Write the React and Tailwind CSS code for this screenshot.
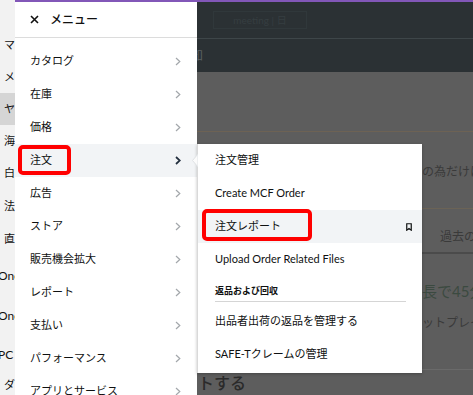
const font = { fontFamily: 'Lato, "Noto Sans CJK JP", sans-serif' };

const mainItems = [
  "カタログ",
  "在庫",
  "価格",
  "注文",
  "広告",
  "ストア",
  "販売機会拡大",
  "レポート",
  "支払い",
  "パフォーマンス",
  "アプリとサービス",
];

const stripItems = [
  { label: "マ", h: "h-[32px]" },
  { label: "メ", h: "h-[32px]" },
  { label: "ヤ", h: "h-[32px]", active: true },
  { label: "海", h: "h-[32px]" },
  { label: "白", h: "h-[33px]" },
  { label: "法", h: "h-[32px]" },
  { label: "直", h: "h-[34px]" },
  { label: "One", h: "h-[40px]", latin: true },
  { label: "One", h: "h-[40px]", latin: true },
  { label: "PC", h: "h-[38px]", latin: true },
  { label: "ダ", h: "h-[22px]" },
];

function Chevron({ dark }) {
  return (
    <svg width="6" height="9" viewBox="0 0 6 9" className="shrink-0">
      <polyline
        points="1,1 4.8,4.5 1,8"
        fill="none"
        stroke={dark ? "#232f3e" : "#a3a7ab"}
        strokeWidth={dark ? 1.7 : 1.2}
      />
    </svg>
  );
}

function Bookmark() {
  return (
    <svg width="6" height="8" viewBox="0 0 6 8">
      <path d="M0.75 0.75 H5.25 V7.2 L3 5.5 L0.75 7.2 Z" fill="none" stroke="#0f1111" strokeWidth="1.2" />
    </svg>
  );
}

function RedBox({ className }) {
  return <div className={`absolute border-4 border-[#ff0000] rounded-[5px] ${className}`} />;
}

function LeftStrip() {
  return (
    <div className="w-[15px] shrink-0 bg-[#f2f2f2] overflow-hidden flex flex-col text-[11px] text-[#111]">
      <div className="h-[29px] shrink-0" />
      {stripItems.map((it, i) => (
        <div
          key={i}
          className={`${it.h} shrink-0 flex items-center whitespace-nowrap ${it.active ? "bg-[#d5d5d5]" : ""} ${
            it.latin ? "-ml-[2px] text-[12px]" : "pl-[4px]"
          }`}
        >
          {it.label}
        </div>
      ))}
    </div>
  );
}

function MainMenu() {
  return (
    <div className="w-[182px] shrink-0 bg-white flex flex-col relative z-10 overflow-hidden">
      <div className="h-[2px] shrink-0 bg-[#8257b8]" />
      <div className="h-[36px] shrink-0 flex items-center gap-[11px] pl-[15px] border-b border-[#dcdcdc]">
        <svg width="9" height="9" viewBox="0 0 9 9">
          <path d="M1 1 L8 8 M8 1 L1 8" stroke="#111" strokeWidth="1.6" />
        </svg>
        <span className="text-[12px] font-medium text-[#111]">メニュー</span>
      </div>
      <div className="h-[7px] shrink-0" />
      {mainItems.map((label) => {
        const active = label === "注文";
        return (
          <div
            key={label}
            className={`relative h-[33px] shrink-0 flex items-center justify-between pl-[15px] pr-[16px] text-[11px] text-[#0f1111] ${
              active ? "bg-[#f2f4f6]" : ""
            }`}
          >
            <span>{label}</span>
            <Chevron dark={active} />
            {active && <RedBox className="left-[3px] top-[1px] w-[53px] h-[30px]" />}
          </div>
        );
      })}
    </div>
  );
}

function SubRow({ children, active, icon }) {
  return (
    <div
      className={`relative h-[33px] shrink-0 flex items-center justify-between pl-[17px] pr-[10px] text-[11px] text-[#0f1111] ${
        active ? "bg-[#f2f4f6]" : ""
      }`}
    >
      <span>{children}</span>
      {icon}
    </div>
  );
}

function SubMenu() {
  return (
    <div className="absolute left-[197px] top-[144px] w-[225px] h-[229px] bg-white border-l border-[#d9d9d9] shadow-[0_1px_3px_rgba(0,0,0,0.25)] z-20 flex flex-col">
      <svg width="6" height="13" viewBox="0 0 6 13" className="absolute left-[-6px] top-[10px]">
        <polygon points="6,0 0.5,6.5 6,13" fill="#fbfbfb" stroke="#dfe2e4" strokeWidth="1" />
      </svg>
      <SubRow>注文管理</SubRow>
      <SubRow>Create MCF Order</SubRow>
      <div className="relative">
        <SubRow active icon={<Bookmark />}>注文レポート</SubRow>
        <RedBox className="left-[4px] top-[-1px] w-[110px] h-[32px]" />
      </div>
      <SubRow>Upload Order Related Files</SubRow>
      <div className="pt-[9px] pb-[3px] px-[17px] pr-[16px]">
        <div className="text-[9px] leading-[12px] font-bold text-[#0f1111]">返品および回収</div>
        <div className="mt-[4px] h-px bg-[#d5d5d5]" />
      </div>
      <SubRow>出品者出荷の返品を管理する</SubRow>
      <SubRow>SAFE-Tクレームの管理</SubRow>
    </div>
  );
}

function Backdrop() {
  return (
    <div className="flex-1 flex flex-col overflow-hidden">
      <div className="h-[2px] shrink-0 bg-[#8257b8]" />
      <div className="h-[70px] shrink-0 bg-[#2b3134] flex flex-col">
        <div className="h-[36px] flex items-center pl-[16px]">
          <div className="h-[18px] w-[94px] border border-[#30383b] flex items-center justify-center text-[10px] text-[#363e41]">
            meeting | 日
          </div>
        </div>
        <div className="h-px bg-[#3e4649]" />
        <div className="flex-1 flex items-center -ml-[6px] text-[12px] text-[#5b6163]">知</div>
      </div>
      <div className="flex-1 bg-[#5d5d5d] flex flex-col text-[#3a3a3a]">
        <div className="mt-[59px] h-px shrink-0 bg-[#6d6254]" />
        <div className="mt-[30px] h-[20px] shrink-0 flex items-center pl-[225px] whitespace-nowrap text-[12px]">
          の為だけに
        </div>
        <div className="mt-[26px] h-px shrink-0 bg-[#6b6356]" />
        <div className="mt-[18px] h-[20px] shrink-0 flex items-center pl-[243px] whitespace-nowrap text-[12px]">
          過去の
        </div>
        <div className="mt-[5px] h-[2px] shrink-0 bg-[#4b4b4b]" />
        <div className="mt-[26px] h-[22px] shrink-0 flex items-center pl-[225px] whitespace-nowrap text-[15px] text-[#3b4a40]">
          長で45分
        </div>
        <div className="mt-[12px] h-[18px] shrink-0 flex items-center pl-[225px] whitespace-nowrap text-[12px]">
          ットプレイス
        </div>
        <div className="mt-[37px] h-px shrink-0 bg-[#6a6a6a]" />
        <div className="mt-[3px] h-[20px] shrink-0 flex items-center pl-[1px] whitespace-nowrap text-[16px] font-medium text-[#2a2a2a]">
          トする
        </div>
      </div>
    </div>
  );
}

export default function App() {
  return (
    <div className="w-[473px] h-[395px] overflow-hidden relative flex" style={font}>
      <LeftStrip />
      <MainMenu />
      <Backdrop />
      <SubMenu />
    </div>
  );
}
